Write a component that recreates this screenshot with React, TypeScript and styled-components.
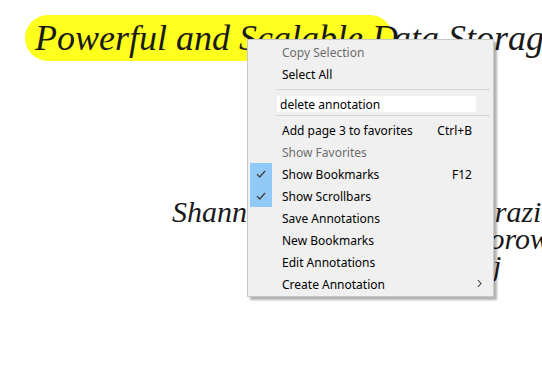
import React from 'react';
import styled, { createGlobalStyle } from 'styled-components';

const GlobalStyle = createGlobalStyle`
  html, body {
    margin: 0;
    padding: 0;
    background: #ffffff;
  }
  body {
    width: 542px;
    height: 381px;
    overflow: hidden;
  }
`;

const Page = styled.div`
  position: relative;
  width: 542px;
  height: 381px;
  overflow: hidden;
  font-family: 'Liberation Serif', 'DejaVu Serif', serif;
  font-style: italic;
  color: #1a1a1a;
`;

const Document = styled.div`
  display: flex;
  flex-direction: column;
  padding: 15px 0 0 25px;
`;

const Title = styled.h1`
  margin: 0;
  white-space: nowrap;
  font-size: 36px;
  font-weight: normal;
  line-height: 46px;
`;

const Highlight = styled.span`
  display: inline-block;
  background: #ffff1e;
  border-radius: 23px;
  padding: 0 0 0 10px;
  width: 358px;
  white-space: nowrap;
`;

const Authors = styled.div`
  display: flex;
  flex-direction: column;
  margin-top: 137px;
  font-size: 30px;
  line-height: 27px;
`;

const AuthorLine = styled.div<{ indent: number }>`
  padding-left: ${p => p.indent}px;
  white-space: nowrap;
`;

const Menu = styled.div`
  position: absolute;
  left: 247px;
  top: 39px;
  width: 245px;
  padding: 1px 0;
  background: #f0f0f0;
  border: 1px solid #c8c8c8;
  box-shadow: 3px 3px 2px rgba(0, 0, 0, 0.3);
  font-family: 'Noto Sans', 'Open Sans', sans-serif;
  font-style: normal;
  font-size: 12px;
  color: #000000;
`;

const Item = styled.div<{ disabled?: boolean }>`
  position: relative;
  display: flex;
  align-items: center;
  height: 22px;
  padding: 0 21px 0 34px;
  color: ${p => (p.disabled ? '#6d6d6d' : '#000000')};
`;

const Label = styled.span`
  flex: 1;
`;

const Shortcut = styled.span``;

const Check = styled.span`
  position: absolute;
  left: 2px;
  top: 0;
  width: 22px;
  height: 22px;
  display: flex;
  align-items: center;
  justify-content: center;
  background: #91c9f7;
`;

const Arrow = styled.span`
  position: absolute;
  right: 11px;
  top: 6px;
  display: flex;
`;

const Separator = styled.div<{ top: number }>`
  height: 1px;
  margin: ${p => p.top}px 3px 3px 29px;
  background: #d7d7d7;
`;

const InputRow = styled.div`
  height: 22px;
  display: flex;
  align-items: center;
  padding-left: 29px;
`;

const TextBox = styled.div`
  width: 196px;
  height: 16px;
  background: #ffffff;
  padding-left: 3px;
  display: flex;
  align-items: center;
  font-size: 12px;
`;

const CheckIcon = () => (
  <svg width="10" height="8" viewBox="0 0 10 8">
    <path d="M1 4.2 L3.8 7 L9 1" fill="none" stroke="#404040" strokeWidth="1.3" />
  </svg>
);

const ChevronIcon = () => (
  <svg width="5" height="9" viewBox="0 0 5 9">
    <path d="M0.8 1 L4 4.5 L0.8 8" fill="none" stroke="#404040" strokeWidth="1.1" />
  </svg>
);

const items: { label: string; shortcut?: string; disabled?: boolean; checked?: boolean; submenu?: boolean }[] = [
  { label: 'Add page 3 to favorites', shortcut: 'Ctrl+B' },
  { label: 'Show Favorites', disabled: true },
  { label: 'Show Bookmarks', shortcut: 'F12', checked: true },
  { label: 'Show Scrollbars', checked: true },
  { label: 'Save Annotations' },
  { label: 'New Bookmarks' },
  { label: 'Edit Annotations' },
  { label: 'Create Annotation', submenu: true },
];

export default function App() {
  return (
    <Page>
      <GlobalStyle />
      <Document>
        <Title>
          <Highlight>Powerful and Scalable D</Highlight>ata Storage
        </Title>
        <Authors>
          <AuthorLine indent={147}>Shannon Veitch, Ahmet Shirazi</AuthorLine>
          <AuthorLine indent={382}>Sven Borowski</AuthorLine>
          <AuthorLine indent={341}>Vikram Raj</AuthorLine>
        </Authors>
      </Document>
      <Menu>
        <Item disabled>
          <Label>Copy Selection</Label>
        </Item>
        <Item>
          <Label>Select All</Label>
        </Item>
        <Separator top={4} />
        <InputRow>
          <TextBox>delete annotation</TextBox>
        </InputRow>
        <Separator top={0} />
        {items.map(it => (
          <Item key={it.label} disabled={it.disabled}>
            {it.checked && (
              <Check>
                <CheckIcon />
              </Check>
            )}
            <Label>{it.label}</Label>
            {it.shortcut && <Shortcut>{it.shortcut}</Shortcut>}
            {it.submenu && (
              <Arrow>
                <ChevronIcon />
              </Arrow>
            )}
          </Item>
        ))}
      </Menu>
    </Page>
  );
}
